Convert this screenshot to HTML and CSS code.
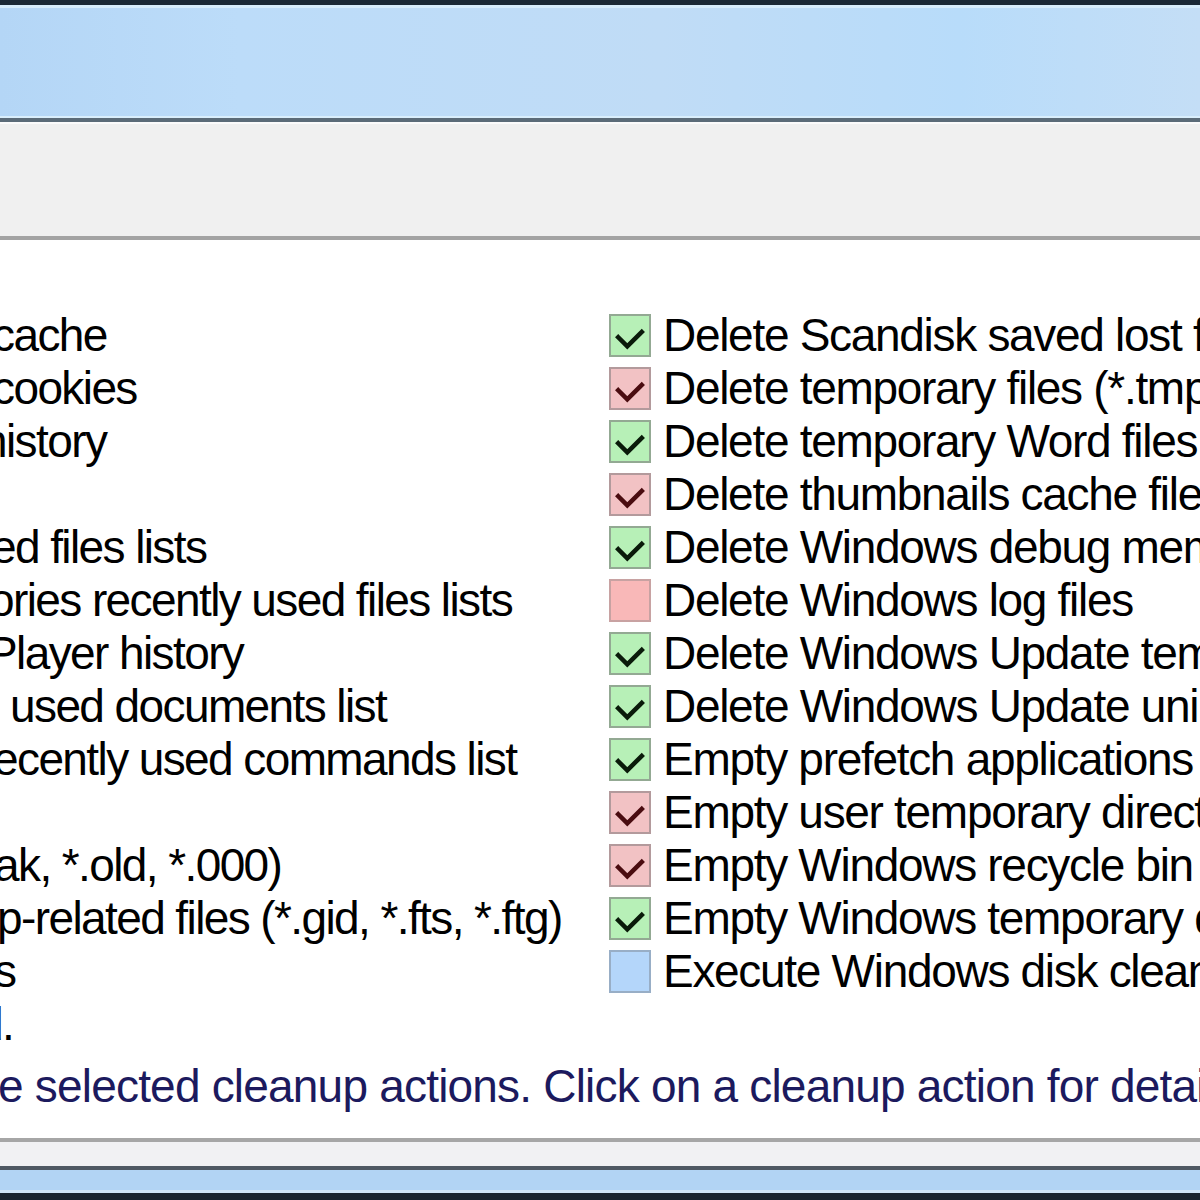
FILE: index.html
```html
<!DOCTYPE html>
<html>
<head>
<meta charset="utf-8">
<link rel="stylesheet" href="styles.css">
</head>
<body>
<div class="window">
  <div class="titlebar"><div class="title-blue"></div></div>
  <div class="toolbar"></div>
  <div class="content">
    <div class="grid">
      <div class="left">
        <div class="row"><span class="frag c8">cache</span></div>
        <div class="row"><span class="frag c8">cookies</span></div>
        <div class="row"><span class="frag c18">history</span></div>
        <div class="row"></div>
        <div class="row"><span class="frag c9">ed files lists</span></div>
        <div class="row"><span class="frag c11">ories recently used files lists</span></div>
        <div class="row"><span class="frag c13">Player history</span></div>
        <div class="row"><span class="frag p10">used documents list</span></div>
        <div class="row"><span class="frag c7">ecently used commands list</span></div>
        <div class="row"></div>
        <div class="row"><span class="frag c6">ak, *.old, *.000)</span></div>
        <div class="row"><span class="frag c3">p-related files (*.gid, *.fts, *.ftg)</span></div>
        <div class="row"><span class="frag c6">s</span></div>
        <div class="row"><span class="frag c22">d.</span></div>
      </div>
      <div class="right">
        <div class="row"><span class="box green"><svg viewBox="0 0 42 42"><polyline points="8,23 18,33 34,17"/></svg></span><span class="label">Delete Scandisk saved lost file fragments</span></div>
        <div class="row"><span class="box red"><svg viewBox="0 0 42 42"><polyline points="8,23 18,33 34,17"/></svg></span><span class="label">Delete temporary files (*.tmp, *._mp)</span></div>
        <div class="row"><span class="box green"><svg viewBox="0 0 42 42"><polyline points="8,23 18,33 34,17"/></svg></span><span class="label">Delete temporary Word files</span></div>
        <div class="row"><span class="box red"><svg viewBox="0 0 42 42"><polyline points="8,23 18,33 34,17"/></svg></span><span class="label">Delete thumbnails cache files</span></div>
        <div class="row"><span class="box green"><svg viewBox="0 0 42 42"><polyline points="8,23 18,33 34,17"/></svg></span><span class="label">Delete Windows debug memory dumps</span></div>
        <div class="row"><span class="box pink"></span><span class="label">Delete Windows log files</span></div>
        <div class="row"><span class="box green"><svg viewBox="0 0 42 42"><polyline points="8,23 18,33 34,17"/></svg></span><span class="label">Delete Windows Update temporary files</span></div>
        <div class="row"><span class="box green"><svg viewBox="0 0 42 42"><polyline points="8,23 18,33 34,17"/></svg></span><span class="label">Delete Windows Update uninstall files</span></div>
        <div class="row"><span class="box green"><svg viewBox="0 0 42 42"><polyline points="8,23 18,33 34,17"/></svg></span><span class="label">Empty prefetch applications cache</span></div>
        <div class="row"><span class="box red"><svg viewBox="0 0 42 42"><polyline points="8,23 18,33 34,17"/></svg></span><span class="label">Empty user temporary directory</span></div>
        <div class="row"><span class="box red"><svg viewBox="0 0 42 42"><polyline points="8,23 18,33 34,17"/></svg></span><span class="label">Empty Windows recycle bin</span></div>
        <div class="row"><span class="box green"><svg viewBox="0 0 42 42"><polyline points="8,23 18,33 34,17"/></svg></span><span class="label">Empty Windows temporary directory</span></div>
        <div class="row"><span class="box blue"></span><span class="label">Execute Windows disk cleanup</span></div>
      </div>
    </div>
    <div class="status"><span class="frag c14">te selected cleanup actions. Click on a cleanup action for details.</span></div>
  </div>
  <div class="bottom">
    <div class="bottom-gray"></div>
    <div class="bottom-blue"></div>
  </div>
</div>
</body>
</html>
```

FILE: styles.css
```css
html, body {
  margin: 0;
  padding: 0;
  background: #ffffff;
}
body {
  width: 1200px;
  height: 1200px;
  overflow: hidden;
  font-family: "Liberation Sans", Arial, sans-serif;
}
.window {
  width: 1200px;
  height: 1200px;
  display: flex;
  flex-direction: column;
  overflow: hidden;
}
.titlebar {
  height: 113px;
  background: #b9dbf8;
  border-top: 5px solid #1a2835;
  border-bottom: 4px solid #5b6b78;
  display: flex;
  flex-direction: column;
}
.title-blue {
  flex: 1;
  border-top: 3px solid #d6ecfb;
  border-bottom: 2px solid #d9eefc;
  background: linear-gradient(90deg, #b4d6f6 0%, #bcdcf9 20%, #c0dcf6 55%, #b8dcfa 80%, #c4def6 100%);
}
.toolbar {
  height: 112px;
  background: #f0f0f0;
  border-top: 2px solid #fbfbfb;
  border-bottom: 4px solid #a3a3a3;
}
.content {
  flex: 1;
  background: #ffffff;
  padding-top: 69px;
  display: flex;
  flex-direction: column;
  overflow: hidden;
}
.grid {
  display: grid;
  grid-template-columns: 609px 591px;
}
.row {
  height: 53px;
  display: flex;
  align-items: center;
  white-space: nowrap;
  font-size: 46px;
  line-height: 53px;
  letter-spacing: -1.3px;
  color: #000000;
}
.left .row {
  letter-spacing: -1.6px;
}
.left, .right {
  overflow: hidden;
}
.left .row {
  overflow: hidden;
}
.frag {
  display: inline-block;
}
.c3 { margin-left: -3px; }
.c6 { margin-left: -6px; }
.c7 { margin-left: -7px; }
.c8 { margin-left: -8px; }
.c9 { margin-left: -9px; }
.c11 { margin-left: -11px; }
.c13 { margin-left: -13px; }
.c14 { margin-left: -14px; }
.c16 { margin-left: -16px; }
.c18 { margin-left: -18px; }
.c22 { margin-left: -22px; }
.p10 { margin-left: 10px; }
.box {
  width: 38px;
  height: 39px;
  flex: 0 0 auto;
  border: 2px solid #9aa79a;
  margin-right: 12px;
  display: flex;
}
.box svg {
  width: 38px;
  height: 39px;
}
.box polyline {
  fill: none;
  stroke-width: 5;
  stroke-linejoin: miter;
  stroke-linecap: square;
}
.green {
  background: #b7f0b7;
  border-color: #93a993;
}
.green polyline { stroke: #0a1a0a; }
.red {
  background: #f2c2c4;
  border-color: #b39a9c;
}
.red polyline { stroke: #4a0c10; }
.pink {
  background: #f9b8b8;
  border-color: #c8a2a2;
}
.blue {
  background: #b4d6fa;
  border-color: #98aec6;
}
.label {
  display: inline-block;
}
.status {
  height: 53px;
  margin-top: 9px;
  display: flex;
  align-items: center;
  white-space: nowrap;
  font-size: 46px;
  line-height: 53px;
  letter-spacing: -0.8px;
  color: #1c1a5e;
}
.bottom {
  height: 62px;
  display: flex;
  flex-direction: column;
}
.bottom-gray {
  height: 24px;
  background: #f1f1f3;
  border-top: 4px solid #a6a6a6;
}
.bottom-blue {
  flex: 1;
  background: #b2d4f4;
  border-top: 4px solid #4f5963;
  border-bottom: 7px solid #1a2530;
  box-shadow: inset 0 -3px 0 #d0e6f8;
}
```
